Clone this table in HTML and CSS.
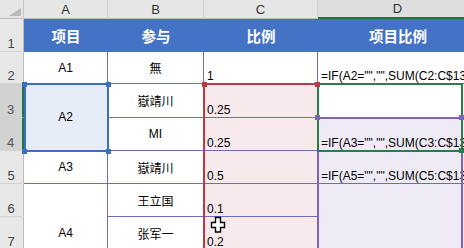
FILE: index.html
```html
<!DOCTYPE html>
<html lang="zh-CN">
<head>
    <meta charset="UTF-8">
    <meta name="viewport" content="width=device-width, initial-scale=1.0">
    <title>项目比例</title>
    <link rel="stylesheet" href="styles.css">
</head>
<body>
    <div class="sheet">
        <div class="grid">
            <!-- column letters -->
            <div class="corner"><span class="corner-tri"></span></div>
            <div class="col-head">A</div>
            <div class="col-head">B</div>
            <div class="col-head">C</div>
            <div class="col-head col-active">D</div>

            <!-- row 1: table header -->
            <div class="row-head">1</div>
            <div class="title">项目</div>
            <div class="title">参与</div>
            <div class="title">比例</div>
            <div class="title">项目比例</div>

            <!-- row 2 -->
            <div class="row-head">2</div>
            <div class="cell">A1</div>
            <div class="cell">無</div>
            <div class="cell num">1</div>
            <div class="cell num">=IF(A2="","",SUM(C2:C$13)-SUM(D3:D$13))</div>

            <!-- rows 3-4 -->
            <div class="row-head row-sel">3</div>
            <div class="cell span-2 picked">A2</div>
            <div class="cell">嶽靖川</div>
            <div class="cell num ref-c">0.25</div>
            <div class="cell num no-line"></div>

            <div class="row-head row-sel">4</div>
            <div class="cell">MI</div>
            <div class="cell num ref-c">0.25</div>
            <div class="cell num ref-d">=IF(A3="","",SUM(C3:C$13)-SUM(D5:D$13))</div>

            <!-- row 5 -->
            <div class="row-head">5</div>
            <div class="cell">A3</div>
            <div class="cell">嶽靖川</div>
            <div class="cell num ref-c">0.5</div>
            <div class="cell num ref-d">=IF(A5="","",SUM(C5:C$13)-SUM(D6:D$13))</div>

            <!-- rows 6-8 -->
            <div class="row-head">6</div>
            <div class="cell span-3">A4</div>
            <div class="cell">王立国</div>
            <div class="cell num ref-c">0.1</div>
            <div class="cell num span-3 ref-d"></div>

            <div class="row-head">7</div>
            <div class="cell">张军一</div>
            <div class="cell num ref-c">0.2</div>

            <div class="row-head">8</div>
            <div class="cell">李强</div>
            <div class="cell num ref-c">0.15</div>
        </div>

        <!-- formula reference outlines -->
        <div class="range range-c"></div>
        <div class="range range-d"></div>
        <div class="range range-active"></div>
        <div class="range range-a"></div>

        <span class="handle h-blue" style="left: 22px; top: 82px;"></span>
        <span class="handle h-blue" style="left: 106px; top: 82px;"></span>
        <span class="handle h-blue" style="left: 22px; top: 149px;"></span>
        <span class="handle h-blue" style="left: 106px; top: 149px;"></span>
        <span class="handle h-purple" style="left: 315px; top: 115px;"></span>
        <span class="handle h-purple" style="left: 459px; top: 115px;"></span>
        <span class="handle h-green" style="left: 459px; top: 148px;"></span>
        <span class="handle h-red" style="left: 202px; top: 82px;"></span>
        <span class="handle h-red" style="left: 315px; top: 82px;"></span>

        <!-- mouse pointer -->
        <svg class="pointer" width="16" height="17" viewBox="0 0 16 17">
            <path d="M5.5 1.5h5v5h4v5h-4v4.5h-5v-4.5h-4v-5h4z" fill="#fff" stroke="#000" stroke-width="1.4"/>
        </svg>
    </div>
</body>
</html>
```

FILE: styles.css
```css
body {
    margin: 0;
    background-color: #fff;
    font-family: "Liberation Sans", "Noto Sans CJK SC", sans-serif;
}

.sheet {
    position: relative;
    width: 464px;
    height: 248px;
    overflow: hidden;
}

.grid {
    display: grid;
    grid-template-columns: 24px 84px 96px 114px 160px;
    grid-template-rows: 19px 33px 32px 34px 33px 33px 33px 33px 33px;
}

/* headers */
.corner {
    position: relative;
    background-color: #e6e6e6;
    border-right: 1px solid #c4c4c4;
    border-bottom: 1px solid #bcbcbc;
}

.corner-tri {
    position: absolute;
    right: 2px;
    bottom: 2px;
    width: 0;
    height: 0;
    border-left: 12px solid transparent;
    border-bottom: 8px solid #b9b9b9;
}

.col-head {
    background-color: #e6e6e6;
    border-right: 1px solid #d0d0d0;
    border-bottom: 1px solid #bcbcbc;
    display: flex;
    align-items: center;
    justify-content: center;
    font-size: 13px;
    color: #333;
}

.col-active {
    background-color: #dedede;
    border-bottom: 2px solid #217346;
}

.row-head {
    background-color: #e8e8e8;
    border-right: 1px solid #bcbcbc;
    border-bottom: 1px solid #d2d2d2;
    display: flex;
    align-items: flex-end;
    justify-content: center;
    font-size: 13px;
    line-height: 13px;
    color: #444;
    padding: 0 1px 1px 0;
}

.row-sel {
    background-color: #d2d2d2;
    border-right: 2px solid #217346;
    color: #555;
}

.title {
    background-color: #4472c4;
    color: #fff;
    font-family: "Noto Sans CJK SC", sans-serif;
    font-weight: bold;
    font-size: 14.5px;
    display: flex;
    align-items: center;
    justify-content: center;
}

/* body cells */
.cell {
    border-right: 1px solid #6b70b6;
    border-bottom: 1px solid #6b70b6;
    display: flex;
    align-items: center;
    justify-content: center;
    font-size: 12px;
    color: #000;
    white-space: nowrap;
    overflow: hidden;
}

.num {
    justify-content: flex-start;
    align-items: flex-end;
    line-height: 12px;
    padding: 0 0 1px 3px;
}

.span-2 {
    grid-row: span 2;
}

.span-3 {
    grid-row: span 3;
}

.no-line {
    border-bottom: none;
}

.picked {
    background-color: #e7edf8;
}

.ref-c {
    background-color: #f8e9ec;
}

.ref-d {
    background-color: #efebf6;
}

/* range outlines drawn over the grid */
.range {
    position: absolute;
    box-sizing: border-box;
}

.range-c {
    left: 203px;
    top: 83px;
    width: 116px;
    height: 200px;
    border: 2px solid #b9394c;
}

.range-d {
    left: 317px;
    top: 117px;
    width: 146px;
    height: 160px;
    border: 2px solid #8062b6;
}

.range-active {
    left: 317px;
    top: 83px;
    width: 146px;
    height: 69px;
    border: 2px solid #2f7a4a;
}

.range-a {
    left: 24px;
    top: 83px;
    width: 85px;
    height: 69px;
    border: 2px solid #3d6fc0;
}

.handle {
    position: absolute;
    width: 5px;
    height: 5px;
}

.h-blue {
    background-color: #3d6fc0;
}

.h-red {
    background-color: #b9394c;
}

.h-purple {
    background-color: #8062b6;
}

.h-green {
    background-color: #2f7a4a;
}

.pointer {
    position: absolute;
    left: 210px;
    top: 216px;
}
```
